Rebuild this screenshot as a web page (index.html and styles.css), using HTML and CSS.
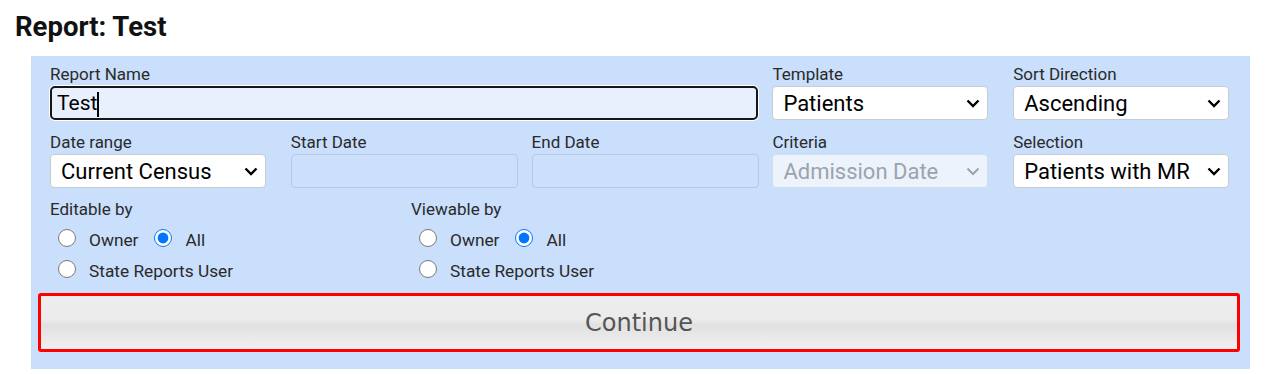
FILE: index.html
```html
<!DOCTYPE html>
<html lang="en">
<head>
<meta charset="utf-8">
<title>Report: Test</title>
<link rel="stylesheet" href="styles.css">
</head>
<body>
<h1 class="title">Report: Test</h1>
<form class="panel">
  <div class="grid">
    <div class="field span3">
      <label class="lbl">Report Name</label>
      <div class="textbox" role="textbox"><span>Test</span><span class="caret"></span></div>
    </div>
    <div class="field">
      <label class="lbl">Template</label>
      <div class="selwrap">
        <select class="sel"><option>Patients</option></select>
        <svg class="chev" width="14" height="9" viewBox="0 0 14 9"><path d="M1.5 1.5 L7 7 L12.5 1.5" fill="none" stroke="currentColor" stroke-width="2.4"/></svg>
      </div>
    </div>
    <div class="field">
      <label class="lbl">Sort Direction</label>
      <div class="selwrap">
        <select class="sel"><option>Ascending</option></select>
        <svg class="chev" width="14" height="9" viewBox="0 0 14 9"><path d="M1.5 1.5 L7 7 L12.5 1.5" fill="none" stroke="currentColor" stroke-width="2.4"/></svg>
      </div>
    </div>

    <div class="field">
      <label class="lbl">Date range</label>
      <div class="selwrap">
        <select class="sel"><option>Current Census</option></select>
        <svg class="chev" width="14" height="9" viewBox="0 0 14 9"><path d="M1.5 1.5 L7 7 L12.5 1.5" fill="none" stroke="currentColor" stroke-width="2.4"/></svg>
      </div>
    </div>
    <div class="field">
      <label class="lbl">Start Date</label>
      <input class="date" type="text" disabled>
    </div>
    <div class="field">
      <label class="lbl">End Date</label>
      <input class="date" type="text" disabled>
    </div>
    <div class="field">
      <label class="lbl">Criteria</label>
      <div class="selwrap disabled">
        <select class="sel" disabled><option>Admission Date</option></select>
        <svg class="chev" width="14" height="9" viewBox="0 0 14 9"><path d="M1.5 1.5 L7 7 L12.5 1.5" fill="none" stroke="currentColor" stroke-width="2"/></svg>
      </div>
    </div>
    <div class="field">
      <label class="lbl">Selection</label>
      <div class="selwrap">
        <select class="sel"><option>Patients with MR</option></select>
        <svg class="chev" width="14" height="9" viewBox="0 0 14 9"><path d="M1.5 1.5 L7 7 L12.5 1.5" fill="none" stroke="currentColor" stroke-width="2.4"/></svg>
      </div>
    </div>
  </div>

  <div class="perms">
    <div class="group">
      <div class="lbl">Editable by</div>
      <div class="radios">
        <label class="opt"><input type="radio" name="ed"><span>Owner</span></label>
        <label class="opt"><input type="radio" name="ed" checked><span>All</span></label>
      </div>
      <div class="radios">
        <label class="opt"><input type="radio" name="ed"><span>State Reports User</span></label>
      </div>
    </div>
    <div class="group">
      <div class="lbl">Viewable by</div>
      <div class="radios">
        <label class="opt"><input type="radio" name="vw"><span>Owner</span></label>
        <label class="opt"><input type="radio" name="vw" checked><span>All</span></label>
      </div>
      <div class="radios">
        <label class="opt"><input type="radio" name="vw"><span>State Reports User</span></label>
      </div>
    </div>
  </div>

  <div class="btnrow">
    <button type="button" class="continue">Continue</button>
  </div>
</form>
</body>
</html>
```

FILE: styles.css
```css
* { box-sizing: border-box; }

body {
  margin: 0;
  background: #fff;
  font-family: Roboto, "Liberation Sans", sans-serif;
  color: #222;
}

.title {
  margin: 12px 0 14px 15px;
  font-size: 27.5px;
  line-height: 30px;
  font-weight: 700;
  color: #111;
}

.panel {
  margin: 0 0 0 31px;
  width: 1219px;
  padding: 8px 0 17px 19px;
  background: #c9dffc;
}

.grid {
  display: grid;
  grid-template-columns: repeat(5, 240.8px);
  row-gap: 12px;
}

.field {
  display: flex;
  flex-direction: column;
}

.field .lbl { margin-bottom: 2px; }

.span3 { grid-column: span 3; }

.lbl {
  font-size: 17px;
  line-height: 20px;
  color: #2a2a2a;
}

.textbox {
  width: 708px;
  height: 34px;
  border: 2px solid #161616;
  border-radius: 5px;
  background: #e8f0fe;
  box-shadow: 0 0 0 1px #fff;
  padding-left: 5px;
  display: flex;
  align-items: center;
  font-size: 21px;
  color: #000;
}

.caret {
  display: inline-block;
  width: 2px;
  height: 25px;
  background: #000;
  margin-left: 0;
  margin-top: 3px;
}

.selwrap {
  position: relative;
  width: 216px;
  height: 34px;
  color: #000;
}

.sel {
  appearance: none;
  -webkit-appearance: none;
  width: 100%;
  height: 100%;
  border: 1px solid #c8ccd2;
  border-radius: 4px;
  background: #fff;
  padding: 0 28px 0 10px;
  font-family: Roboto, "Liberation Sans", sans-serif;
  font-size: 22px;
  color: #000;
}

.chev {
  position: absolute;
  right: 8px;
  top: 13px;
  pointer-events: none;
}

.selwrap.disabled { color: #9ca3ab; }
.selwrap.disabled .sel {
  background: #ecf3fd;
  border-color: #d2deee;
  color: #9ca3ab;
  opacity: 1;
}

.date {
  width: 227px;
  height: 34px;
  border: 1px solid #b6cae5;
  border-radius: 4px;
  background: #cde0fb;
}

.perms {
  display: flex;
  margin-top: 11px;
}

.group {
  width: 361px;
}

.radios {
  display: flex;
  align-items: center;
  height: 31px;
}

.group .lbl { margin-bottom: 3px; }

.opt {
  display: inline-flex;
  align-items: center;
  font-size: 17.3px;
  color: #2a2a2a;
}

.opt span { padding-top: 5px; }

.opt + .opt { margin-left: 8px; }

.opt input {
  width: 18px;
  height: 18px;
  margin: 0 13px 0 8px;
}

.btnrow {
  margin: 9px 0 0 -12px;
}

.continue {
  display: block;
  width: 1202px;
  height: 59px;
  border: 3px solid #ff0000;
  border-radius: 3px;
  background: linear-gradient(#eeeeee 0%, #ebebeb 45%, #e1e1e1 55%, #f0f0f0 100%);
  font-family: "DejaVu Sans", Verdana, sans-serif;
  font-size: 24px;
  color: #555;
  padding: 0;
}
```
